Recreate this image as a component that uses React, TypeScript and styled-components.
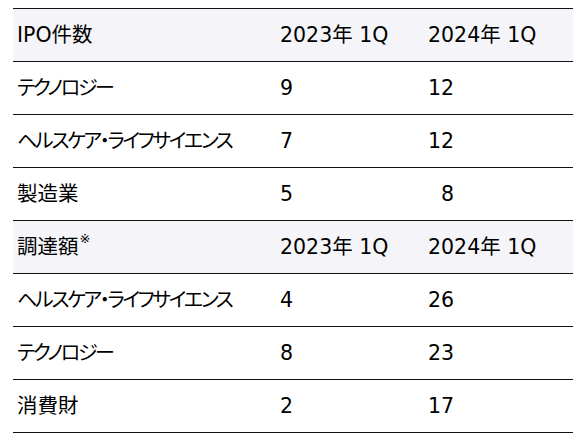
import React from "react";
import styled, { createGlobalStyle } from "styled-components";

const GlobalStyle = createGlobalStyle`
  body {
    margin: 0;
    background: #ffffff;
  }
`;

const Wrapper = styled.div`
  padding: 8px 4px 0 13px;
`;

const Table = styled.table`
  width: 560px;
  border-collapse: collapse;
  table-layout: fixed;
  border-top: 1px solid #111;
  font-family: "DejaVu Sans", "Noto Sans CJK JP", sans-serif;
  font-feature-settings: "palt";
  font-size: 20px;
  color: #000;
`;

const Row = styled.tr<{ $head?: boolean }>`
  height: 53px;
  background: ${({ $head }) => ($head ? "#f5f5f9" : "#ffffff")};
  border-bottom: 1px solid #111;
`;

const Cell = styled.td<{ $kana?: boolean }>`
  padding: 0 0 0 4px;
  vertical-align: middle;
  white-space: nowrap;
  line-height: 1.2;
  font-size: ${({ $kana }) => ($kana ? "20px" : "20.5px")};
  letter-spacing: ${({ $kana }) => ($kana ? "-2.3px" : "0")};
`;

const Note = styled.sup`
  font-size: 13px;
  vertical-align: top;
  position: relative;
  top: -4px;
  margin-left: 1px;
`;

type Section = {
  title: React.ReactNode;
  rows: [string, string, string][];
};

const sections: Section[] = [
  {
    title: "IPO件数",
    rows: [
      ["テクノロジー", "9", "12"],
      ["ヘルスケア・ライフサイエンス", "7", "12"],
      ["製造業", "5", "\u00a0\u00a08"],
    ],
  },
  {
    title: (
      <>
        調達額<Note>※</Note>
      </>
    ),
    rows: [
      ["ヘルスケア・ライフサイエンス", "4", "26"],
      ["テクノロジー", "8", "23"],
      ["消費財", "2", "17"],
    ],
  },
];

const isKana = (s: string) => /[\u30a0-\u30ff]/.test(s);

export default function App() {
  return (
    <Wrapper>
      <GlobalStyle />
      <Table>
        <colgroup>
          <col style={{ width: 263 }} />
          <col style={{ width: 148 }} />
          <col style={{ width: 149 }} />
        </colgroup>
        <tbody>
          {sections.map((section, i) => (
            <React.Fragment key={i}>
              <Row $head>
                <Cell>{section.title}</Cell>
                <Cell>2023年 1Q</Cell>
                <Cell>2024年 1Q</Cell>
              </Row>
              {section.rows.map(([label, a, b]) => (
                <Row key={label}>
                  <Cell $kana={isKana(label)}>{label}</Cell>
                  <Cell>{a}</Cell>
                  <Cell>{b}</Cell>
                </Row>
              ))}
            </React.Fragment>
          ))}
        </tbody>
      </Table>
    </Wrapper>
  );
}
